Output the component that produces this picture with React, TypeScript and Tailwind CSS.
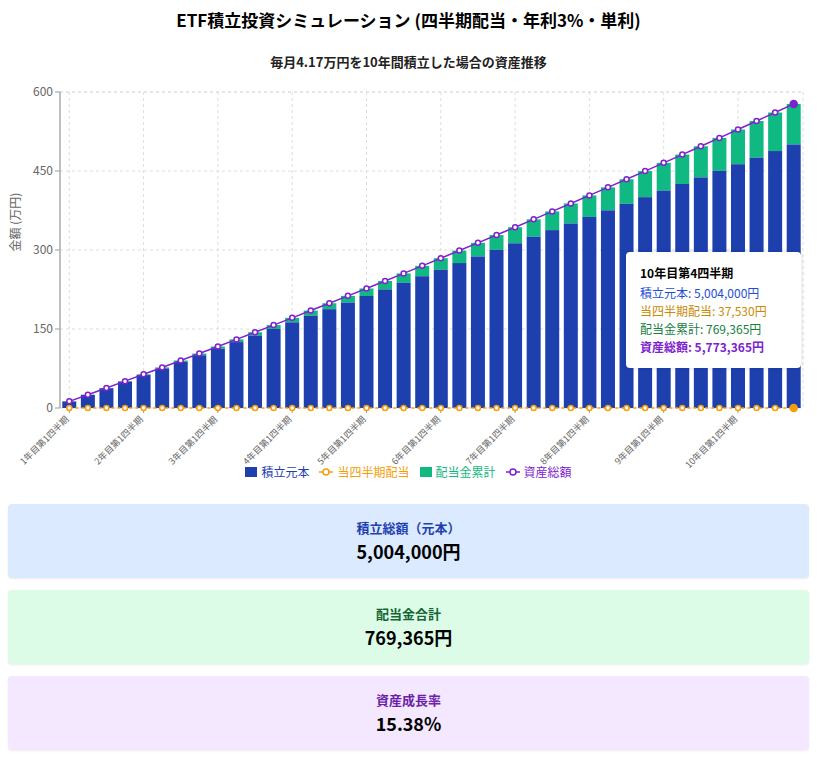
import React from "react";

const FONT = { fontFamily: '"Noto Sans CJK JP", "Noto Sans", sans-serif' };

export default function App() {
  const N = 40;
  const q = 125100;
  const data = Array.from({ length: N }, (_, i) => {
    const p = q * (i + 1);
    const d = Math.round(p * 0.0075);
    return { p, d };
  });
  let cum = 0;
  const rows = data.map((r) => {
    cum += r.d;
    return { ...r, cum, total: r.p + cum };
  });
  const top = 10, bottom = 326, left = 60, right = 803;
  const y = (v: number) => bottom - (v / 6000000) * (bottom - top);
  const slot = (right - left) / N;
  const cx = (i: number) => left + slot * (i + 0.5);
  const bw = 14;
  const totalPath = rows.map((r, i) => `${i ? "L" : "M"}${cx(i)},${y(r.total)}`).join(" ");
  return (
    <div className="w-[817px] bg-white" style={FONT}>
      <h1 className="text-center text-[17px] font-bold text-black pt-[6px] leading-[28px]">
        ETF積立投資シミュレーション (四半期配当・年利3%・単利)
      </h1>
      <h2 className="text-center text-[13px] font-bold text-[#222] mt-[18px] leading-[20px]">
        毎月4.17万円を10年間積立した場合の資産推移
      </h2>
      <div className="relative h-[388px] mt-[10px]">
        <svg width="817" height="388" className="absolute left-0 top-0">
          {[0, 150, 300, 450, 600].map((v) => (
            <g key={v}>
              <line x1={left} x2={right} y1={y(v * 10000)} y2={y(v * 10000)} stroke="#ddd" strokeDasharray="3 3" />
              <line x1={left - 5} x2={left} y1={y(v * 10000)} y2={y(v * 10000)} stroke="#999" />
              <text x={left - 7} y={y(v * 10000) + 4} textAnchor="end" fontSize="12" fill="#666">{v}</text>
            </g>
          ))}
          {Array.from({ length: 10 }, (_, k) => (
            <g key={k}>
              <line x1={cx(k * 4)} x2={cx(k * 4)} y1={top} y2={bottom} stroke="#ddd" strokeDasharray="3 3" />
              <line x1={cx(k * 4)} x2={cx(k * 4)} y1={bottom} y2={bottom + 5} stroke="#999" />
              <text x={cx(k * 4)} y={bottom + 12} textAnchor="end" fontSize="9" fill="#666" transform={`rotate(-45 ${cx(k * 4)} ${bottom + 12})`}>
                {k + 1}年目第1四半期
              </text>
            </g>
          ))}
          <line x1={right} x2={right} y1={top} y2={bottom} stroke="#ddd" strokeDasharray="3 3" />
          <line x1={left} x2={right} y1={top} y2={top} stroke="#ddd" strokeDasharray="3 3" />
          <line x1={left} x2={left} y1={top} y2={bottom} stroke="#aaa" strokeWidth="1.5" />
          <text x={20} y={140} textAnchor="middle" fontSize="12" fill="#666" transform="rotate(-90 20 140)">金額 (万円)</text>
          {rows.map((r, i) => (
            <g key={i}>
              <rect x={cx(i) - bw / 2} y={y(r.total)} width={bw} height={y(r.p) - y(r.total)} fill="#10b981" />
              <rect x={cx(i) - bw / 2} y={y(r.p)} width={bw} height={bottom - y(r.p)} fill="#1e40af" />
            </g>
          ))}
          <line x1={cx(0)} x2={cx(N - 1)} y1={bottom} y2={bottom} stroke="#f59e0b" strokeWidth="1.5" strokeDasharray="3 3" />
          {rows.map((_, i) => (
            <circle key={i} cx={cx(i)} cy={bottom} r={i === N - 1 ? 3.5 : 2.5} fill={i === N - 1 ? "#f59e0b" : "#fff"} stroke="#f59e0b" strokeWidth="1.5" />
          ))}
          <path d={totalPath} fill="none" stroke="#7e22ce" strokeWidth="1.5" />
          {rows.map((r, i) => (
            <circle key={i} cx={cx(i)} cy={y(r.total)} r={i === N - 1 ? 3.5 : 2.5} fill={i === N - 1 ? "#7e22ce" : "#fff"} stroke="#7e22ce" strokeWidth="1.5" />
          ))}
        </svg>
        <div className="absolute left-[626px] top-[170px] w-[175px] rounded bg-white px-[14px] py-[12px] text-[12px] leading-[18px] shadow-[0_0_4px_rgba(0,0,0,0.15)]">
          <div className="font-bold text-black mb-[2px]">10年目第4四半期</div>
          <div className="text-[#1d4ed8]">積立元本: 5,004,000円</div>
          <div className="text-[#ca8a04]">当四半期配当: 37,530円</div>
          <div className="text-[#15803d]">配当金累計: 769,365円</div>
          <div className="font-bold text-[#7e22ce]">資産総額: 5,773,365円</div>
        </div>
      </div>
      <div className="flex justify-center gap-[10px] text-[12px] leading-[16px] -mt-[6px]">
        <span className="flex items-center gap-[4px] text-[#1e40af]"><span className="w-[12px] h-[10px] bg-[#1e40af]" />積立元本</span>
        <span className="flex items-center gap-[4px] text-[#f59e0b]">
          <svg width="14" height="10"><line x1="0" x2="14" y1="5" y2="5" stroke="#f59e0b" strokeWidth="1.5" /><circle cx="7" cy="5" r="3" fill="#fff" stroke="#f59e0b" strokeWidth="1.5" /></svg>当四半期配当
        </span>
        <span className="flex items-center gap-[4px] text-[#10b981]"><span className="w-[12px] h-[10px] bg-[#10b981]" />配当金累計</span>
        <span className="flex items-center gap-[4px] text-[#7e22ce]">
          <svg width="14" height="10"><line x1="0" x2="14" y1="5" y2="5" stroke="#7e22ce" strokeWidth="1.5" /><circle cx="7" cy="5" r="3" fill="#fff" stroke="#7e22ce" strokeWidth="1.5" /></svg>資産総額
        </span>
      </div>
      <div className="flex flex-col gap-[12px] px-[8px] mt-[24px] pb-[9px]">
        {[
          { l: "積立総額（元本）", v: "5,004,000円", bg: "bg-[#dbeafe]", t: "text-[#1e40af]" },
          { l: "配当金合計", v: "769,365円", bg: "bg-[#dcfce7]", t: "text-[#166534]" },
          { l: "資産成長率", v: "15.38%", bg: "bg-[#f3e8ff]", t: "text-[#6b21a8]" },
        ].map((c) => (
          <div key={c.l} className={`${c.bg} h-[74px] rounded flex flex-col items-center justify-center shadow-[0_1px_2px_rgba(0,0,0,0.08)]`}>
            <div className={`${c.t} text-[13px] font-semibold leading-[20px]`}>{c.l}</div>
            <div className="text-black text-[18px] font-bold leading-[26px]">{c.v}</div>
          </div>
        ))}
      </div>
    </div>
  );
}
